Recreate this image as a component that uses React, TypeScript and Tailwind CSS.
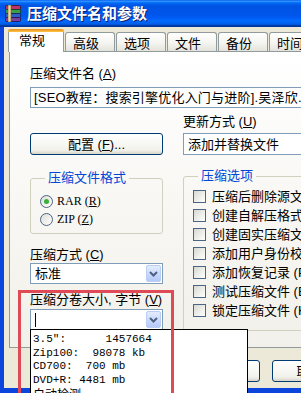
import React from "react";

const Chevron = () => (
  <svg width="9" height="6" viewBox="0 0 9 6">
    <path d="M1 1 L4.5 4.5 L8 1" fill="none" stroke="#4D6185" strokeWidth="2" />
  </svg>
);

const Combo = ({ text, cursor, h = 21 }: { text?: string; cursor?: boolean; h?: number }) => (
  <div
    className="flex items-center bg-white border border-[#7F9DB9] pl-[4px] pr-[1px]"
    style={{ height: h }}
  >
    <div className="flex-1 text-[13px] leading-[15px] whitespace-nowrap overflow-hidden text-black">
      {cursor ? <span className="inline-block w-px h-[14px] bg-black align-middle" /> : text}
    </div>
    <div className="w-[15px] h-[17px] rounded-[2px] border border-[#BACDF5] bg-[linear-gradient(to_bottom,#E4ECFE,#B4C9F8)] flex items-center justify-center">
      <Chevron />
    </div>
  </div>
);

const Check = ({ label }: { label: string }) => (
  <div className="flex items-center h-[19px] gap-[6px] whitespace-nowrap">
    <div className="w-[13px] h-[13px] shrink-0 border border-[#4B6584] bg-[linear-gradient(135deg,#D8D8D2,#FFFFFF)]" />
    <span className="text-[13px] leading-[15px]">{label}</span>
  </div>
);

const Radio = ({ label, on }: { label: React.ReactNode; on?: boolean }) => (
  <div className="flex items-center h-[14px] gap-[4px]">
    <div className="w-[13px] h-[13px] rounded-full border border-[#4B6584] bg-[linear-gradient(135deg,#DCDCD7,#FFFFFF)] flex items-center justify-center">
      {on && <div className="w-[5px] h-[5px] rounded-full bg-[#3AAE3A]" />}
    </div>
    <span className="text-[12px] leading-[14px] font-['Liberation_Serif','Noto_Sans_CJK_SC',serif]">{label}</span>
  </div>
);

const U = ({ c }: { c: string }) => <span className="underline">{c}</span>;

const Tab = ({ label, active }: { label: string; active?: boolean }) =>
  active ? (
    <div className="relative shrink-0 w-[56px] h-[23px] border-x border-[#919B9C] rounded-t-[3px] bg-white flex pl-[10px] pt-[4px] text-[13px] leading-[15px]">
      <div className="absolute left-[-1px] right-[-1px] top-0 h-[3px] rounded-t-[3px] bg-[linear-gradient(to_bottom,#E68B2C,#FFC73C)]" />
      {label}
    </div>
  ) : (
    <div className="shrink-0 w-[50px] h-[19px] mb-[1px] ml-[1px] border border-b-0 border-[#919B9C] rounded-t-[3px] bg-[linear-gradient(to_bottom,#FFFFFF,#F3F3EF_60%,#E3E2DA)] flex pl-[7px] pt-[3px] text-[13px] leading-[15px]">
      {label}
    </div>
  );

const XPButton = ({ children, w }: { children?: React.ReactNode; w: number }) => (
  <div
    className="h-[22px] shrink-0 rounded-[3px] border border-[#003C74] bg-[linear-gradient(to_bottom,#FFFFFF,#F2F2EC_80%,#D9D4C8)] flex items-center justify-center text-[13px] leading-[15px]"
    style={{ width: w }}
  >
    {children}
  </div>
);

export default function App() {
  return (
    <div className="relative w-[301px] h-[393px] overflow-hidden bg-[#ECE9D8] flex flex-col text-black font-['Liberation_Sans','Noto_Sans_CJK_SC',sans-serif]">
      {/* Title bar */}
      <div className="h-[27px] shrink-0 flex items-center pl-[5px] gap-[6px] bg-[linear-gradient(to_bottom,#0058EE_0%,#3593FF_4%,#288EFF_6%,#127DFF_8%,#036FFC_10%,#0262EE_14%,#0057E5_20%,#0054E3_24%,#0055EB_56%,#005BF5_66%,#026AFE_76%,#0062EF_86%,#0052D6_92%,#0040AB_94%,#003092_100%)]">
        <svg width="16" height="17" viewBox="0 0 16 17">
          <rect x="0.5" y="0.5" width="15" height="4" rx="1" fill="#B8336A" stroke="#3A1030" strokeWidth="0.8" />
          <rect x="0.5" y="4.5" width="15" height="4" rx="1" fill="#3C9E48" stroke="#123A18" strokeWidth="0.8" />
          <rect x="0.5" y="8.5" width="15" height="4" rx="1" fill="#2D5FC4" stroke="#0E2150" strokeWidth="0.8" />
          <rect x="0.5" y="12.5" width="15" height="4" rx="1" fill="#7B3FA0" stroke="#2A1040" strokeWidth="0.8" />
          <rect x="3" y="0" width="3" height="17" fill="#E8D8A8" stroke="#6B5A30" strokeWidth="0.6" />
        </svg>
        <span className="text-white font-bold text-[15px] leading-[17px] [text-shadow:1px_1px_0_#0A1E6E]">
          压缩文件名和参数
        </span>
      </div>

      <div className="flex flex-1 min-h-0">
        <div className="w-[4px] shrink-0 bg-[#0B45DC]" />
        <div className="flex-1 min-w-0 flex flex-col pt-[2px]">
          {/* Tabs */}
          <div className="relative z-10 flex items-end h-[23px] -mb-px pl-[4px] shrink-0">
            <Tab label="常规" active />
            <Tab label="高级" />
            <Tab label="选项" />
            <Tab label="文件" />
            <Tab label="备份" />
            <Tab label="时间" />
          </div>

          {/* Panel */}
          <div className="ml-[5px] w-[340px] h-[297px] shrink-0 border border-[#919B9C] bg-[linear-gradient(to_bottom,#FFFFFF,#F7F6F2_60%,#F1F0EA)] pl-[20px] pt-[15px]">
            <div className="text-[13px] leading-[14px]">
              压缩文件名 (<U c="A" />)
            </div>
            <div className="mt-[6px] h-[21px] border border-[#7F9DB9] bg-white flex items-center pl-[3px] text-[13px] leading-[15px] tracking-[0.2px] whitespace-nowrap overflow-hidden">
              [SEO教程：搜索引擎优化入门与进阶].吴泽欣.rar
            </div>

            <div className="flex gap-[20px] items-start">
              {/* Left column */}
              <div className="w-[133px] shrink-0 flex flex-col">
                <div className="mt-[25px]">
                  <XPButton w={133}>
                    <span className="h-[20px] flex items-center">
                      配置 (<U c="F" />)...
                    </span>
                  </XPButton>
                </div>
                <fieldset className="mt-[16px] border border-[#D0D0BF] rounded-[3px] pl-[9px] pt-[9px] pb-[7px]">
                  <legend className="ml-[5px] px-[3px] text-[13px] leading-[14px] text-[#0046D5]">压缩文件格式</legend>
                  <div className="flex flex-col gap-[4px]">
                    <Radio on label={<>RAR (<U c="R" />)</>} />
                    <Radio label={<>ZIP (<U c="Z" />)</>} />
                  </div>
                </fieldset>
                <div className="mt-[14px] text-[13px] leading-[14px] whitespace-nowrap">
                  压缩方式 (<U c="C" />)
                </div>
                <div className="mt-[1px]">
                  <Combo text="标准" />
                </div>
                <div className="mt-[9px] text-[13px] leading-[14px] whitespace-nowrap">
                  压缩分卷大小, 字节 (<U c="V" />)
                </div>
                <div className="mt-[2px]">
                  <Combo cursor />
                </div>
              </div>

              {/* Right column */}
              <div className="w-[160px] shrink-0 flex flex-col">
                <div className="mt-[7px] text-[13px] leading-[14px] whitespace-nowrap">
                  更新方式 (<U c="U" />)
                </div>
                <div className="mt-[4px]">
                  <Combo text="添加并替换文件" h={22} />
                </div>
                <fieldset className="mt-[14px] h-[162px] border border-[#D0D0BF] rounded-[3px] pl-[9px] pt-[4px]">
                  <legend className="ml-[5px] px-[3px] text-[13px] leading-[14px] text-[#0046D5]">压缩选项</legend>
                  <Check label="压缩后删除源文件 (D)" />
                  <Check label="创建自解压格式压缩文件 (X)" />
                  <Check label="创建固实压缩文件 (S)" />
                  <Check label="添加用户身份校验信息 (T)" />
                  <Check label="添加恢复记录 (P)" />
                  <Check label="测试压缩文件 (E)" />
                  <Check label="锁定压缩文件 (K)" />
                </fieldset>
              </div>
            </div>
          </div>

          {/* Bottom buttons */}
          <div className="flex mt-[12px] ml-[181px] gap-[12px] shrink-0">
            <XPButton w={75}>确定</XPButton>
            <XPButton w={75}>取消</XPButton>
          </div>
        </div>
      </div>
      <div className="h-[5px] shrink-0 bg-[#0B45DC]" />

      {/* Open dropdown list */}
      <div className="absolute left-[30px] top-[329px] w-[218px] h-[80px] bg-white border border-black pl-[2px] pt-[3px] font-['Liberation_Mono',monospace] text-[11px] leading-[13.5px] whitespace-pre text-black">
        <div>{'3.5":      1457664'}</div>
        <div>{"Zip100:  98078 kb"}</div>
        <div>{"CD700:  700 mb"}</div>
        <div>{"DVD+R: 4481 mb"}</div>
        <div className="font-['Noto_Sans_CJK_SC',sans-serif] text-[12px]">自动检测</div>
      </div>

      {/* Red annotation frame */}
      <div className="absolute left-[18px] top-[290px] w-[156px] h-[120px] border-[3px] border-[#DE4A55] pointer-events-none" />
    </div>
  );
}
